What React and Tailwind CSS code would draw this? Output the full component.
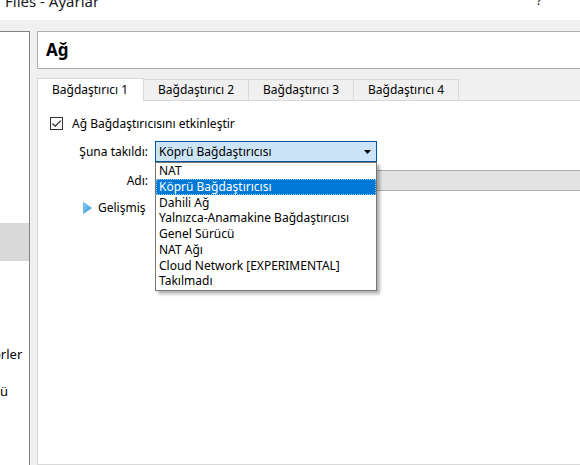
import React from 'react';

const sideItems = [
  'Genel',
  'Sistem',
  'Ekran',
  'Depolama',
  'Ses',
  'Ağ',
  'Seri Noktalar',
  'USB',
  'Paylaşılan Klasörler',
  'Kullanıcı Arayüzü',
];

const adapterTypes = [
  'NAT',
  'Köprü Bağdaştırıcısı',
  'Dahili Ağ',
  'Yalnızca-Anamakine Bağdaştırıcısı',
  'Genel Sürücü',
  'NAT Ağı',
  'Cloud Network [EXPERIMENTAL]',
  'Takılmadı',
];

const tabs = ['Bağdaştırıcı 1', 'Bağdaştırıcı 2', 'Bağdaştırıcı 3', 'Bağdaştırıcı 4'];

const App = () => {
  return (
    <div className="w-[580px] h-[465px] overflow-hidden bg-[#f0f0f0] flex flex-col text-[12px] text-black font-['Segoe_UI','Noto_Sans',sans-serif]">
      {/* Title bar */}
      <div className="h-[20px] shrink-0 bg-white overflow-hidden flex justify-between px-[5px]">
        <span className="text-[15px] leading-[20px] -mt-[9px] text-[#1b1b1b]">Files - Ayarlar</span>
        <span className="text-[13px] leading-[20px] -mt-[10px] mr-[33px] text-[#1b1b1b]">?</span>
      </div>

      <div className="flex flex-1 pt-[11px] min-h-0">
        {/* Side list (scrolled) */}
        <div className="w-[30px] shrink-0 bg-white border-r border-t border-[#828282] overflow-hidden">
          <div className="w-[160px] -ml-[128px] pt-[3px] flex flex-col">
            {sideItems.map((item) => (
              <div
                key={item}
                className={`h-[37.6px] flex items-center pl-[32px] whitespace-nowrap text-[13px] ${
                  item === 'Ağ' ? 'bg-[#d9d9d9]' : ''
                }`}
              >
                {item}
              </div>
            ))}
          </div>
        </div>

        {/* Page */}
        <div className="flex-1 ml-[7px] flex flex-col min-w-0 overflow-hidden">
          <div className="h-[38px] w-[600px] shrink-0 bg-white border border-[#adadad] flex items-center pl-[8px]">
            <span className="text-[17px] font-bold">Ağ</span>
          </div>

          {/* Tabs */}
          <div className="mt-[8px] h-[23px] shrink-0 flex items-end">
            {tabs.map((tab, i) => (
              <div
                key={tab}
                className={
                  i === 0
                    ? 'h-[23px] w-[107px] bg-white border border-b-0 border-[#d9d9d9] flex items-center pl-[14px] -mb-px relative z-10'
                    : 'h-[21px] w-[105px] bg-[#f0f0f0] border border-l-0 border-b-0 border-[#d9d9d9] flex items-center pl-[14px]'
                }
              >
                {tab}
              </div>
            ))}
          </div>

          {/* Tab panel */}
          <div className="relative flex-1 w-[600px] bg-white border border-[#d9d9d9]">
            <div className="flex items-center gap-[9px] mt-[16px] ml-[12px] h-[13px]">
              <div className="w-[13px] h-[13px] border border-[#333333] flex items-center justify-center">
                <svg width="11" height="11" viewBox="0 0 11 11">
                  <path d="M1.5 5.5 L4.2 8.2 L9.8 2.6" fill="none" stroke="#222222" strokeWidth="1.1" />
                </svg>
              </div>
              <span>Ağ Bağdaştırıcısını etkinleştir</span>
            </div>

            <div className="flex items-center mt-[11px] h-[21px]">
              <div className="w-[110px] text-right">Şuna takıldı:</div>
              <div className="ml-[7px] w-[222px] h-[21px] bg-[#cce4f7] border border-[#005499] flex items-center justify-between pl-[3px] pr-[5px]">
                <span>Köprü Bağdaştırıcısı</span>
                <svg width="7" height="4" viewBox="0 0 7 4">
                  <path d="M0 0 H7 L3.5 4 Z" fill="#000" />
                </svg>
              </div>
            </div>

            <div className="flex items-center mt-[8px] h-[21px]">
              <div className="w-[110px] text-right">Adı:</div>
              <div className="ml-[7px] flex-1 h-[21px] bg-[#e3e3e3] border border-[#adadad]"></div>
            </div>

            <div className="flex items-center mt-[10px] ml-[45px] h-[14px] gap-[6px]">
              <svg width="9" height="12" viewBox="0 0 9 12">
                <defs>
                  <linearGradient id="tri" x1="0" y1="0" x2="1" y2="1">
                    <stop offset="0" stopColor="#8fd0f5" />
                    <stop offset="1" stopColor="#2b95da" />
                  </linearGradient>
                </defs>
                <path d="M0.5 0.5 L8.5 6 L0.5 11.5 Z" fill="url(#tri)" stroke="#3a9be0" strokeWidth="0.6" />
              </svg>
              <span>Gelişmiş</span>
            </div>

            {/* Open dropdown list */}
            <div className="absolute left-[117px] top-[61px] w-[222px] bg-white border border-[#767676] shadow-[3px_3px_3px_rgba(0,0,0,0.3)] pb-px z-20">
              {adapterTypes.map((type) => (
                <div
                  key={type}
                  className={`h-[15.75px] leading-[15.75px] pl-[3px] whitespace-nowrap ${
                    type === 'Köprü Bağdaştırıcısı'
                      ? 'bg-[#0078d7] text-white outline outline-1 outline-dotted outline-[#99c9ef] -outline-offset-1'
                      : ''
                  }`}
                >
                  {type}
                </div>
              ))}
            </div>
          </div>
        </div>
      </div>
    </div>
  );
};

export default App;
